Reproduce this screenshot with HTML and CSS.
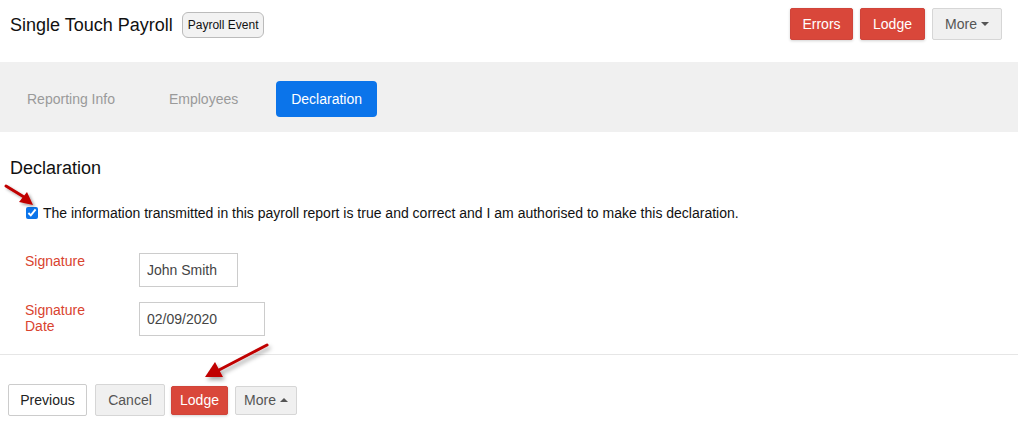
FILE: index.html
```html
<!DOCTYPE html>
<html>
<head>
<meta charset="utf-8">
<link rel="stylesheet" href="styles.css">
</head>
<body>
<div class="page">
  <header class="topbar">
    <div class="title-wrap">
      <h1 class="title">Single Touch Payroll</h1>
      <span class="badge">Payroll Event</span>
    </div>
    <div class="actions">
      <button class="btn btn-danger btn-top">Errors</button>
      <button class="btn btn-danger btn-top">Lodge</button>
      <button class="btn btn-default btn-top">More <span class="caret-down"></span></button>
    </div>
  </header>

  <nav class="tabs">
    <a class="tab">Reporting Info</a>
    <a class="tab">Employees</a>
    <a class="tab active">Declaration</a>
  </nav>

  <section class="content">
    <h2 class="section-title">Declaration</h2>
    <label class="check-row">
      <input type="checkbox" checked class="check">
      <span>The information transmitted in this payroll report is true and correct and I am authorised to make this declaration.</span>
    </label>
    <div class="form-row row-sig">
      <label class="form-label">Signature</label>
      <input class="field field-sig" type="text" value="John Smith">
    </div>
    <div class="form-row row-date">
      <label class="form-label">Signature<br>Date</label>
      <input class="field field-date" type="text" value="02/09/2020">
    </div>
  </section>

  <footer class="footer">
    <button class="btn btn-white btn-foot">Previous</button>
    <button class="btn btn-default btn-foot">Cancel</button>
    <button class="btn btn-danger btn-foot-sm">Lodge</button>
    <button class="btn btn-default btn-foot-sm">More <span class="caret-up"></span></button>
  </footer>

  <svg class="arrow arrow-1" width="50" height="40" viewBox="0 0 50 40">
    <defs>
      <filter id="sh1" x="-50%" y="-50%" width="200%" height="200%">
        <feDropShadow dx="2" dy="2" stdDeviation="1.5" flood-color="#000" flood-opacity="0.35"/>
      </filter>
    </defs>
    <g filter="url(#sh1)">
      <line x1="6" y1="6" x2="24" y2="17" stroke="#c00000" stroke-width="3" stroke-linecap="round"/>
      <polygon points="33,25 19,22 27,12" fill="#c00000"/>
    </g>
  </svg>

  <svg class="arrow arrow-2" width="80" height="50" viewBox="0 0 80 50">
    <defs>
      <filter id="sh2" x="-50%" y="-50%" width="200%" height="200%">
        <feDropShadow dx="2" dy="3" stdDeviation="2" flood-color="#000" flood-opacity="0.35"/>
      </filter>
    </defs>
    <g filter="url(#sh2)">
      <line x1="72" y1="5" x2="24" y2="30" stroke="#c00000" stroke-width="3" stroke-linecap="round"/>
      <polygon points="10,37 20,22 28,37" fill="#c00000"/>
    </g>
  </svg>
</div>
</body>
</html>
```

FILE: styles.css
```css
* { box-sizing: border-box; }
html, body {
  margin: 0;
  padding: 0;
  background: #fff;
}
body {
  font-family: "Liberation Sans", Arial, sans-serif;
  font-size: 14px;
  color: #222;
}
.page {
  position: relative;
  width: 1018px;
  height: 431px;
  overflow: hidden;
}
.topbar {
  display: flex;
  justify-content: space-between;
  align-items: flex-start;
  height: 62px;
  padding: 8px 16px 0 10px;
}
.title-wrap {
  display: flex;
  align-items: center;
  gap: 10px;
  height: 34px;
}
.title {
  margin: 0;
  font-size: 18px;
  font-weight: normal;
  color: #111;
}
.badge {
  display: inline-block;
  font-size: 12px;
  color: #111;
  background: #f2f2f2;
  border: 1px solid #bbb;
  border-radius: 6px;
  padding: 5px 5px;
  line-height: 14px;
  margin-left: -1px;
}
.actions {
  display: flex;
  gap: 7px;
}
.btn {
  font-family: "Liberation Sans", Arial, sans-serif;
  font-size: 14px;
  border-radius: 2px;
  cursor: pointer;
  display: inline-flex;
  align-items: center;
  justify-content: center;
}
.btn-danger {
  background: #d9473a;
  color: #fff;
  border: 1px solid #d0443a;
  box-shadow: 0 1px 3px rgba(0,0,0,0.18);
}
.btn-default {
  background: #f0f0f0;
  color: #555;
  border: 1px solid #d6d6d6;
}
.btn-white {
  background: #fff;
  color: #222;
  border: 1px solid #ccc;
}
.btn-top {
  height: 32px;
  padding: 0 13px;
}
.btn-top:nth-child(1) { width: 63px; }
.btn-top:nth-child(2) { width: 65px; }
.btn-top:nth-child(3) { width: 70px; }
.caret-down {
  display: inline-block;
  margin-left: 4px;
  width: 0;
  height: 0;
  border-left: 4px solid transparent;
  border-right: 4px solid transparent;
  border-top: 4px solid #555;
}
.caret-up {
  display: inline-block;
  margin-left: 4px;
  width: 0;
  height: 0;
  border-left: 4px solid transparent;
  border-right: 4px solid transparent;
  border-bottom: 4px solid #555;
}
.tabs {
  display: flex;
  align-items: center;
  gap: 22px;
  height: 70px;
  background: #f0f0f0;
  padding: 19px 0 15px 11px;
}
.tab {
  display: block;
  padding: 0 16px;
  height: 36px;
  line-height: 36px;
  color: #9a9a9a;
  border-radius: 4px;
  font-size: 14px;
}
.tab.active {
  background: #0b74ea;
  color: #fff;
  padding: 0 15px;
}
.content {
  padding: 24px 0 0 10px;
  height: 223px;
  border-bottom: 1px solid #e6e6e6;
}
.section-title {
  margin: 0;
  font-size: 18px;
  font-weight: normal;
  color: #111;
  line-height: 24px;
}
.check-row {
  display: flex;
  align-items: center;
  margin: 25px 0 0 16px;
  color: #111;
  line-height: 16px;
}
.check {
  margin: 0 5px 0 0;
  width: 12px;
  height: 12px;
  accent-color: #0b74ea;
}
.form-row {
  display: flex;
  align-items: flex-start;
  margin-left: 15px;
}
.row-sig { margin-top: 32px; }
.row-date { margin-top: 15px; }
.form-label {
  width: 114px;
  color: #d9432f;
  line-height: 16px;
}
.field {
  font-family: "Liberation Sans", Arial, sans-serif;
  font-size: 14px;
  color: #444;
  border: 1px solid #ccc;
  height: 34px;
  padding: 0 7px;
  background: #fff;
  outline: none;
}
.field-sig { width: 99px; }
.field-date { width: 126px; }
.footer {
  display: flex;
  align-items: center;
  gap: 8px;
  padding: 29px 0 0 8px;
}
.btn-foot {
  height: 32px;
  padding: 0 11px;
}
.btn-foot:nth-child(1) { width: 79px; }
.btn-foot:nth-child(2) { width: 70px; }
.btn-foot-sm {
  height: 29px;
  padding: 0 8px;
}
.btn-foot-sm:nth-child(3) { width: 57px; margin-left: -2px; }
.btn-foot-sm:nth-child(4) { width: 62px; margin-left: -1px; }
.arrow {
  position: absolute;
  pointer-events: none;
}
.arrow-1 { left: 0; top: 180px; }
.arrow-2 { left: 195px; top: 340px; }
```
